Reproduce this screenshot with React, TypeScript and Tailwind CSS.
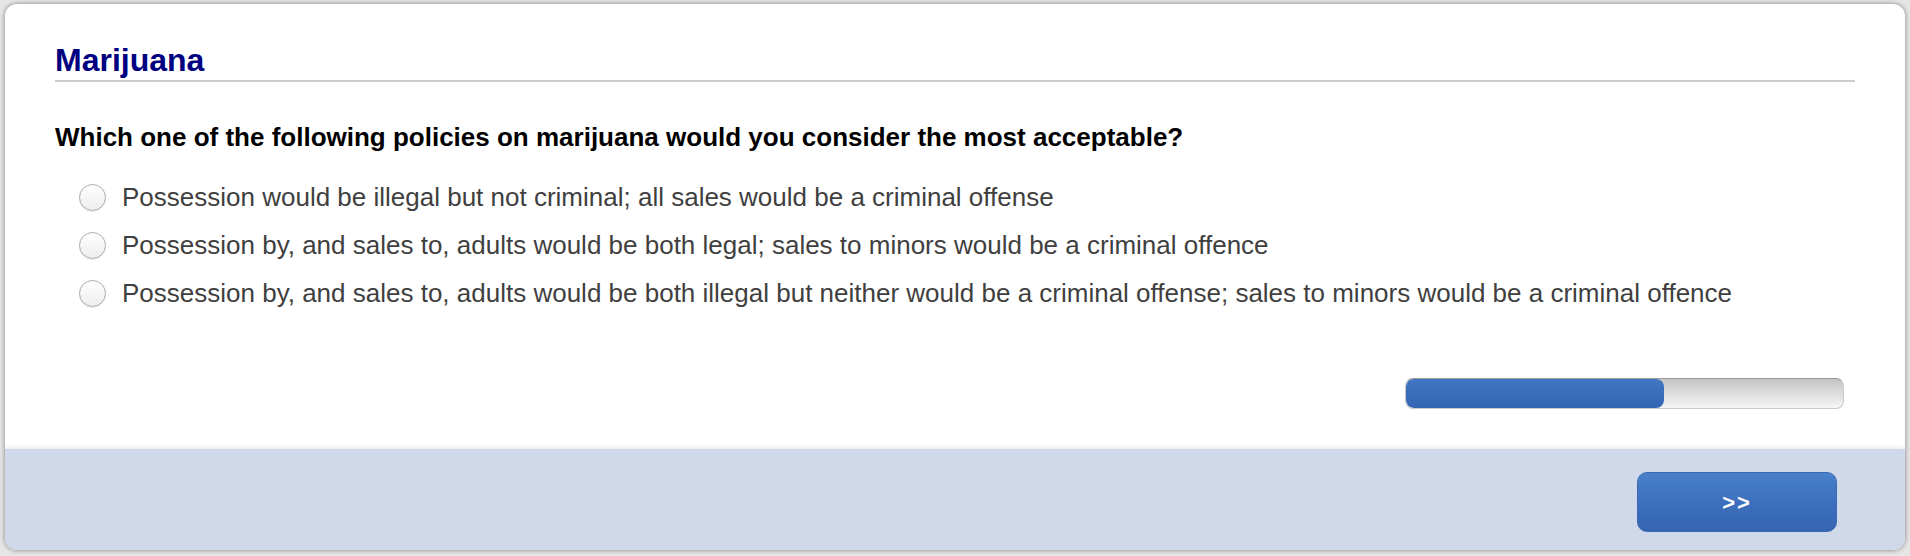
import React, { useState } from 'react';

const options = [
  'Possession would be illegal but not criminal; all sales would be a criminal offense',
  'Possession by, and sales to, adults would be both legal; sales to minors would be a criminal offence',
  'Possession by, and sales to, adults would be both illegal but neither would be a criminal offense; sales to minors would be a criminal offence',
];

export default function App() {
  const [choice, setChoice] = useState<number | null>(null);

  return (
    <div
      className="w-full h-[556px] bg-[#e6e6e6] pt-[4px] px-[5px]"
      style={{ fontFamily: '"Liberation Sans", Arial, Helvetica, sans-serif' }}
    >
      <div className="h-[546px] bg-white rounded-[12px] shadow-[0_0_5px_rgba(0,0,0,0.45)] flex flex-col overflow-hidden">
        {/* question area */}
        <div className="flex-1 px-[50px] pt-[38px]">
          <h1 className="text-[32px] leading-[36px] font-bold text-[#000080] pb-[2px] border-b-2 border-[#cccccc]">
            Marijuana
          </h1>

          <p className="mt-[40px] text-[26px] leading-[30px] font-bold text-black">
            Which one of the following policies on marijuana would you consider the most acceptable?
          </p>

          <div className="mt-[21px] flex flex-col">
            {options.map((label, i) => (
              <label
                key={i}
                onClick={() => setChoice(i)}
                className="h-[48px] flex items-center cursor-pointer"
              >
                <span className="ml-[24px] w-[27px] h-[27px] rounded-full border border-[#aaaaaa] bg-gradient-to-b from-white to-[#eeeeee] shadow-[0_1px_1px_rgba(0,0,0,0.08)] flex items-center justify-center shrink-0">
                  {choice === i && <span className="w-[11px] h-[11px] rounded-full bg-[#3a6cb9]" />}
                </span>
                <span className="ml-[16px] text-[26px] leading-[48px] text-[#3f3f3f]">{label}</span>
              </label>
            ))}
          </div>

          {/* progress */}
          <div className="mt-[61px] flex justify-end pr-[11px]">
            <div className="w-[439px] h-[31px] rounded-[8px] border border-[#c9c9c9] border-t-[#9a9a9a] bg-gradient-to-b from-[#c4c4c4] to-[#f6f6f6] overflow-hidden">
              <div className="w-[59%] h-full rounded-[8px] bg-gradient-to-b from-[#4176c2] to-[#3465b4]" />
            </div>
          </div>
        </div>

        {/* footer */}
        <div className="h-[101px] bg-[#cfd9ea] shadow-[0_-2px_4px_rgba(0,0,0,0.08)] flex justify-end pt-[23px] pr-[68px]">
          <button className="w-[200px] h-[60px] rounded-[10px] border border-[#3a69b3] bg-gradient-to-b from-[#4a81c9] via-[#3d6fbd] to-[#3565b3] text-white text-[22px] font-bold tracking-[2px]">
            &gt;&gt;
          </button>
        </div>
      </div>
    </div>
  );
}
